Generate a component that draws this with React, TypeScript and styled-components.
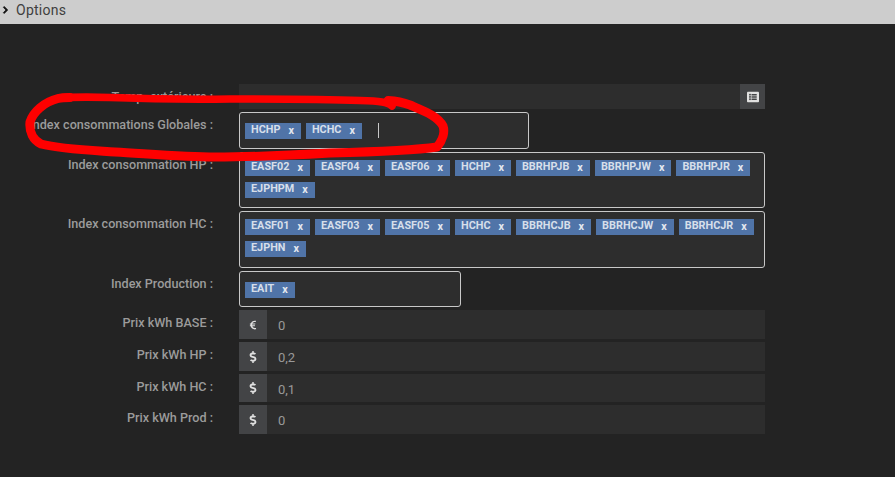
import { createGlobalStyle } from "styled-components";
import styled from "styled-components";
import { FaChevronRight, FaDollarSign, FaEuroSign, FaListAlt } from "react-icons/fa";

const Global = createGlobalStyle`
  html, body {
    margin: 0;
    padding: 0;
    height: 100%;
    overflow: hidden;
    background: #232323;
    font-family: Roboto, "Liberation Sans", sans-serif;
  }
`;

const Page = styled.div`
  position: relative;
  width: 895px;
  height: 477px;
  background: #232323;
`;

const Header = styled.div`
  height: 24px;
  box-sizing: border-box;
  display: flex;
  align-items: center;
  gap: 7px;
  padding: 0 0 4px 2px;
  background: #cdcdcd;
  color: #3f3f3f;
  font-size: 14px;
  letter-spacing: 0.25px;

  svg {
    width: 7px;
    height: 8px;
    color: #111;
    stroke: #111;
    stroke-width: 50;
  }
`;

const Form = styled.div`
  display: flex;
  flex-direction: column;
  gap: 3px;
  padding-top: 60px;
`;

const Row = styled.div`
  display: flex;
  gap: 26px;
`;

const Label = styled.div`
  width: 213px;
  flex-shrink: 0;
  padding-top: 1px;
  text-align: right;
  font-size: 12.6px;
  font-weight: 500;
  line-height: 24px;
  color: #9b9b9b;
  white-space: nowrap;
`;

const InputGroup = styled.div<{ $h: number }>`
  width: 526px;
  height: ${({ $h }) => $h}px;
  display: flex;
  background: #2d2d2d;
`;

const Grow = styled.div`
  flex: 1;
`;

const Addon = styled.div<{ $w: number }>`
  width: ${({ $w }) => $w}px;
  flex-shrink: 0;
  display: flex;
  align-items: center;
  justify-content: center;
  background: #434446;
  color: #e0e0e0;
`;

const ValueText = styled.div`
  padding-left: 11px;
  font-size: 13px;
  line-height: 31px;
  color: #999;
`;

const TagBox = styled.div<{ $w: number; $h: number; $top: number }>`
  width: ${({ $w }) => $w}px;
  height: ${({ $h }) => $h}px;
  box-sizing: border-box;
  display: flex;
  flex-wrap: wrap;
  align-content: flex-start;
  gap: 6px 5px;
  padding: ${({ $top }) => $top}px 0 0 5px;
  background: #2d2d2d;
  border: 1px solid #c8c8c8;
  border-radius: 3px;
`;

const Tag = styled.span`
  height: 16px;
  display: flex;
  align-items: flex-start;
  gap: 8px;
  padding: 0 7px 0 6px;
  background: #5074a8;
  color: #d7dfea;
  font-size: 10.85px;
  font-weight: 700;
  line-height: 14px;
  white-space: nowrap;
`;

const Close = styled.span`
  line-height: 16px;
  color: #e4e8ef;
`;

const Caret = styled.span`
  width: 1px;
  height: 15px;
  margin-left: 11px;
  background: #c8c8c8;
`;

const Scribble = styled.svg`
  position: absolute;
  left: 0;
  top: 0;
  pointer-events: none;

  path {
    fill: none;
    stroke: #fe0000;
    stroke-linecap: round;
    stroke-linejoin: round;
  }
`;

type TagRow = {
  label: string;
  tags: string[];
  width: number;
  height: number;
  top: number;
  caret?: boolean;
};

const tagRows: TagRow[] = [
  { label: "Index consommations Globales :", tags: ["HCHP", "HCHC"], width: 290, height: 37, top: 10, caret: true },
  {
    label: "Index consommation HP :",
    tags: ["EASF02", "EASF04", "EASF06", "HCHP", "BBRHPJB", "BBRHPJW", "BBRHPJR", "EJPHPM"],
    width: 526,
    height: 56,
    top: 7,
  },
  {
    label: "Index consommation HC :",
    tags: ["EASF01", "EASF03", "EASF05", "HCHC", "BBRHCJB", "BBRHCJW", "BBRHCJR", "EJPHN"],
    width: 526,
    height: 57,
    top: 7,
  },
  { label: "Index Production :", tags: ["EAIT"], width: 222, height: 36, top: 10 },
];

const prices = [
  { label: "Prix kWh BASE :", value: "0", height: 29, euro: true },
  { label: "Prix kWh HP :", value: "0,2", height: 29 },
  { label: "Prix kWh HC :", value: "0,1", height: 28 },
  { label: "Prix kWh Prod :", value: "0", height: 29 },
];

export default function App() {
  return (
    <Page>
      <Global />
      <Header>
        <FaChevronRight />
        Options
      </Header>
      <Form>
        <Row>
          <Label>Temp. extérieure :</Label>
          <InputGroup $h={25}>
            <Grow />
            <Addon $w={25}>
              <FaListAlt size={12} />
            </Addon>
          </InputGroup>
        </Row>
        {tagRows.map((row) => (
          <Row key={row.label}>
            <Label>{row.label}</Label>
            <TagBox $w={row.width} $h={row.height} $top={row.top}>
              {row.tags.map((tag) => (
                <Tag key={tag}>
                  {tag}
                  <Close>x</Close>
                </Tag>
              ))}
              {row.caret && <Caret />}
            </TagBox>
          </Row>
        ))}
        {prices.map((price) => (
          <Row key={price.label}>
            <Label>{price.label}</Label>
            <InputGroup $h={price.height}>
              <Addon $w={28}>{price.euro ? <FaEuroSign size={10} /> : <FaDollarSign size={12} />}</Addon>
              <ValueText>{price.value}</ValueText>
            </InputGroup>
          </Row>
        ))}
      </Form>
      <Scribble width="895" height="477" viewBox="0 0 895 477">
        <path
          strokeWidth="7.6"
          d="M392 106 C388 102 380 101 360 100.5 C320 99 270 99 230 99 C190 99.5 150 99 110 97.5 C90 97 70 96.5 58 98.5"
        />
        <path
          strokeWidth="9"
          d="M70 97.5 C62 97.5 60 98 58 98.5 C44 102 33 112 30 122 C29 132 33 140 41 144 C60 149 85 150 115 152 C150 154 185 157 215 157 C255 157 295 155 330 153 C370 152 410 151 437 147 C443 140 445 132 443 126 C438 116 424 111 410 105 C402 102 396 101 388 100.5"
        />
      </Scribble>
    </Page>
  );
}
